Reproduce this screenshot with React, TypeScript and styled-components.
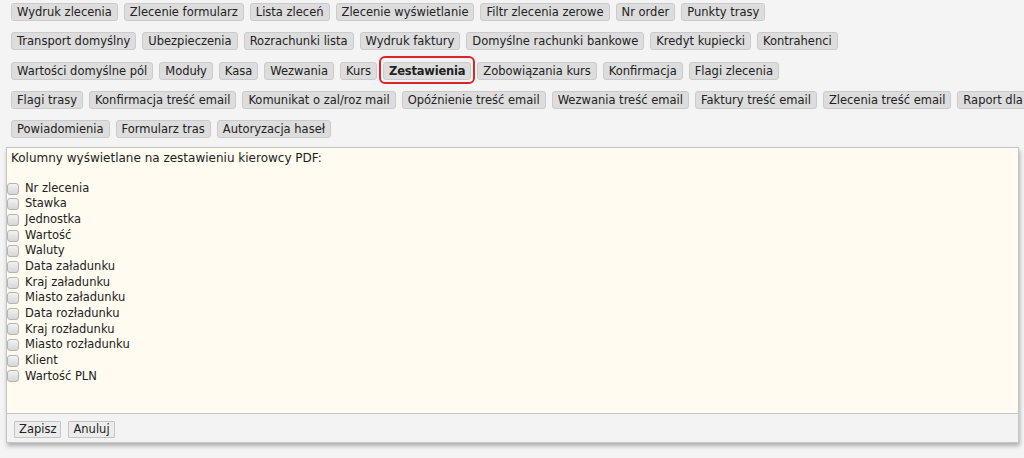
import React from 'react';
import styled, { createGlobalStyle } from 'styled-components';

const rows: string[][] = [
  ['Wydruk zlecenia', 'Zlecenie formularz', 'Lista zleceń', 'Zlecenie wyświetlanie', 'Filtr zlecenia zerowe', 'Nr order', 'Punkty trasy'],
  ['Transport domyślny', 'Ubezpieczenia', 'Rozrachunki lista', 'Wydruk faktury', 'Domyślne rachunki bankowe', 'Kredyt kupiecki', 'Kontrahenci'],
  ['Wartości domyślne pól', 'Moduły', 'Kasa', 'Wezwania', 'Kurs', 'Zestawienia', 'Zobowiązania kurs', 'Konfirmacja', 'Flagi zlecenia'],
  ['Flagi trasy', 'Konfirmacja treść email', 'Komunikat o zal/roz mail', 'Opóźnienie treść email', 'Wezwania treść email', 'Faktury treść email', 'Zlecenia treść email', 'Raport dla klienta'],
  ['Powiadomienia', 'Formularz tras', 'Autoryzacja haseł'],
];

const columns = [
  'Nr zlecenia',
  'Stawka',
  'Jednostka',
  'Wartość',
  'Waluty',
  'Data załadunku',
  'Kraj załadunku',
  'Miasto załadunku',
  'Data rozładunku',
  'Kraj rozładunku',
  'Miasto rozładunku',
  'Klient',
  'Wartość PLN',
];

const GlobalStyle = createGlobalStyle`
  html, body {
    margin: 0;
    padding: 0;
    background: #f4f4f4;
    overflow: hidden;
  }
  body {
    font-family: "DejaVu Sans", Verdana, sans-serif;
    font-size: 11.5px;
    color: #222;
  }
`;

const Page = styled.div`
  width: 1024px;
  height: 458px;
  overflow: hidden;
`;

const Tabs = styled.div`
  display: flex;
  flex-direction: column;
  gap: 11.3px;
  padding: 3px 0 0 11px;
`;

const TabRow = styled.div`
  display: flex;
  gap: 6px;
  white-space: nowrap;
`;

const TabButton = styled.button<{ $active?: boolean }>`
  position: relative;
  flex-shrink: 0;
  height: 18px;
  padding: 0 5px;
  border: 1px solid #cbcbcb;
  border-radius: 3px;
  background: #dddddd;
  font-family: inherit;
  font-size: 11.5px;
  line-height: 16px;
  color: #222;
  font-weight: ${(props) => (props.$active ? 700 : 400)};
  letter-spacing: ${(props) => (props.$active ? '-0.2px' : '0')};

  &::after {
    content: '';
    display: ${(props) => (props.$active ? 'block' : 'none')};
    position: absolute;
    top: -7px;
    bottom: -5px;
    left: -5px;
    right: -5px;
    border: 2px solid #d8262c;
    border-radius: 6px;
  }
`;

const Panel = styled.div`
  margin: 9px 5px 0 6px;
  border: 1px solid #c6c6c6;
  box-shadow: 1px 3px 4px rgba(0, 0, 0, 0.28);
`;

const PanelBody = styled.div`
  min-height: 262px;
  padding: 3px 5px 0 4px;
  background: #fffbf0;
  line-height: 15.65px;
`;

const Title = styled.p`
  margin: 0 0 14px;
  font-size: 12px;
`;

const ColumnList = styled.ul`
  list-style: none;
  margin: 0;
  padding: 0;
`;

const ColumnItem = styled.li`
  display: flex;
  align-items: center;
  height: 15.65px;
`;

const Check = styled.input`
  appearance: none;
  width: 12px;
  height: 12px;
  margin: 0 6px 0 -4px;
  border: 1px solid #b4b4b4;
  border-radius: 3px;
  background: linear-gradient(#f2f2f2, #d6d6d6);
`;

const Footer = styled.div`
  display: flex;
  gap: 7px;
  padding: 7px 7px 2px;
  height: 19px;
  border-top: 1px solid #c6c6c6;
  background: #f3f3f3;
`;

const FormButton = styled.button`
  height: 17px;
  padding: 0 4px;
  border: 1px solid #c4c4c4;
  border-radius: 1px;
  background: #ececec;
  font-family: inherit;
  font-size: 11.5px;
  line-height: 15px;
  color: #222;
`;

const App = (): JSX.Element => {
  return (
    <Page>
      <GlobalStyle />
      <Tabs>
        {rows.map((row, i) => (
          <TabRow key={i}>
            {row.map((label) => (
              <TabButton key={label} $active={label === 'Zestawienia'}>
                {label}
              </TabButton>
            ))}
          </TabRow>
        ))}
      </Tabs>
      <Panel>
        <PanelBody>
          <Title>Kolumny wyświetlane na zestawieniu kierowcy PDF:</Title>
          <ColumnList>
            {columns.map((col) => (
              <ColumnItem key={col}>
                <Check type="checkbox" />
                {col}
              </ColumnItem>
            ))}
          </ColumnList>
        </PanelBody>
        <Footer>
          <FormButton>Zapisz</FormButton>
          <FormButton>Anuluj</FormButton>
        </Footer>
      </Panel>
    </Page>
  );
};

export default App;
